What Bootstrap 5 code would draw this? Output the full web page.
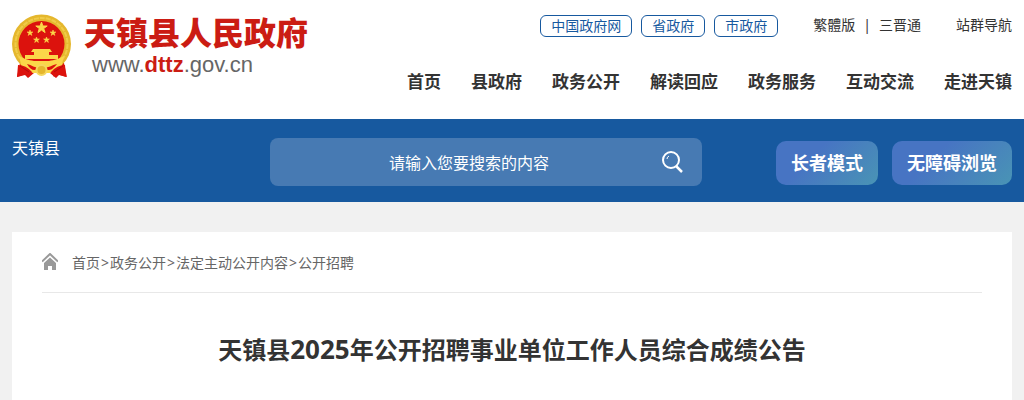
<!DOCTYPE html>
<html lang="zh-CN">
<head>
<meta charset="utf-8">
<meta name="viewport" content="width=device-width, initial-scale=1">
<title>天镇县2025年公开招聘事业单位工作人员综合成绩公告</title>
<link href="https://cdn.jsdelivr.net/npm/bootstrap@5.3.0/dist/css/bootstrap.min.css" rel="stylesheet">
<style>
  body { font-family: "Noto Sans", "Noto Sans CJK SC", sans-serif; font-size: 14px; line-height: 20px; color: #333; background: #f1f1f1; }
  a { color: inherit; text-decoration: none; }
  .emblem { width: 60px; height: 66px; }
  .site-name { font-size: 32px; line-height: 40px; font-weight: 900; color: #cb1c13; }
  .site-url { font-family: "Liberation Sans", sans-serif; font-size: 22px; line-height: 24px; color: #666; }
  .site-url b { color: #cb1c13; }
  .site-header { padding-top: 13px; padding-bottom: 25px; }
  .header-side { gap: 33px; }
  .gov-links { gap: 9px; margin-right: 35px; }
  .gov-link { border: 1px solid #17599f; border-radius: 6px; color: #17599f; padding: 0 10px; }
  .top-links { padding-top: 2px; line-height: 20px; }
  .sites { margin-left: 35px; }
  .main-nav { gap: 30px; font-size: 17px; line-height: 24px; font-weight: 700; }
  .band { background: #17599f; color: #fff; padding-top: 19px; padding-bottom: 16px; }
  .region { font-size: 16px; }
  .search { width: 432px; height: 48px; border-radius: 8px; background: #477ab3; }
  .search input { background: none; border: 0; outline: 0; color: #fff; font-size: 16px; line-height: 24px; text-align: center; min-width: 0; padding: 2px 0 0 10px; }
  .search input::placeholder { color: #fff; opacity: 1; }
  .modes { gap: 14px; margin-left: 74px; padding-top: 3px; }
  .mode-btn { height: 44px; border: 0; border-radius: 10px; padding: 0 15px; color: #fff; font-size: 18px; font-weight: 700; background: linear-gradient(135deg, #4774c3 35%, #4994b5); }
  .article { padding: 20px 30px 32px; margin-top: 30px; }
  .crumbs { gap: 14px; color: #666; border-bottom: 1px solid #e8e8e8; padding-bottom: 19px; padding-top: 1px; }
  .crumbs .sep { padding: 0 1px; }
  h1 { font-size: 24px; line-height: 36px; font-weight: 700; margin-top: 38px; }
  h1 .year { font-size: 26px; }
</style>
</head>
<body>
<header class="bg-white">
  <div class="container-fluid site-header d-flex justify-content-between">
    <a href="#" class="d-flex">
      <svg class="emblem flex-shrink-0" viewBox="0 0 60 66" aria-hidden="true">
        <path d="M8 50 5 64l8-2 3 3 6-5h16l6 5 3-3 8 2-3-14z" fill="#d9120d"/>
        <circle cx="29.500" cy="31" r="29.500" fill="#e5b72d"/>
        <circle cx="29.500" cy="31" r="26" fill="none" stroke="#f0cb48" stroke-width="2" stroke-dasharray="5 1"/>
        <circle cx="29.500" cy="31" r="23" fill="#dc120d"/>
        <g fill="#fbd749">
          <path d="m29.500 9 1.400 4h4.300l-3.500 2.500 1.400 4.100-3.600-2.500-3.500 2.500 1.300-4.100-3.500-2.500h4.300z" stroke="#fbd749"/>
          <path d="m18 17 .7 2h2.200l-1.700 1.300.7 2.100-1.900-1.300-1.800 1.300.7-2.100-1.800-1.300h2.200zM41 17l.7 2h2.200l-1.700 1.300.7 2.100-1.900-1.300-1.800 1.300.7-2.100-1.800-1.300h2.200zM24.500 24l.7 2h2.200l-1.700 1.300.7 2.100-1.900-1.300-1.800 1.300.7-2.100-1.800-1.300h2.200zM34.500 24l.7 2h2.200l-1.700 1.300.7 2.100-1.900-1.300-1.800 1.300.7-2.100-1.800-1.300h2.200z" stroke="#fbd749" stroke-width=".6"/>
          <path d="M21 36h17l2 3H19zM22 39h15v3h9v4H13v-4h9z"/>
          <path d="M7 43c6 3 9 4 15 5h15c6-1 9-2 15-5l-3 12-11 5H21l-11-5z"/>
        </g>
        <path d="M15 51c5 1 7 4 14.500 4S40 52 45 51c-4 5-6 6-9 6l-6.500-2-7 2c-3 0-5-2-7.500-6z" fill="#dc120d"/>
        <circle cx="29.500" cy="57" r="5" fill="#e5b72d" stroke="#f5d75d" stroke-width="2"/>
        <path d="M6 52q8 0 14 7l-3 5-3-3-9 3zm47 0q-8 0-14 7l3 5 3-3 9 3z" fill="#dc120d"/>
        <path d="m8 53 9 6M51 53l-9 6" stroke="#b40b0b" stroke-width="1"/>
      </svg>
      <span class="d-flex flex-column ps-2">
        <span class="site-name ps-1">天镇县人民政府</span>
        <span class="site-url ps-2 ms-1">www.<b>dttz</b>.gov.cn</span>
      </span>
    </a>
    <div class="header-side d-flex flex-column align-items-end">
      <div class="top-links d-flex">
        <div class="gov-links d-flex">
          <a class="gov-link" href="#">中国政府网</a>
          <a class="gov-link" href="#">省政府</a>
          <a class="gov-link" href="#">市政府</a>
        </div>
        <a href="#">繁體版</a><span class="px-2">|</span><a href="#">三晋通</a>
        <a class="sites" href="#">站群导航</a>
      </div>
      <nav class="main-nav d-flex" aria-label="主导航">
        <a href="#">首页</a><a href="#">县政府</a><a href="#">政务公开</a><a href="#">解读回应</a><a href="#">政务服务</a><a href="#">互动交流</a><a href="#">走进天镇</a>
      </nav>
    </div>
  </div>
</header>
<section class="band">
  <div class="container-fluid d-flex">
    <div class="region flex-fill">天镇县</div>
    <form class="search d-flex align-items-center">
      <input class="flex-fill" type="text" placeholder="请输入您要搜索的内容" aria-label="搜索">
      <button class="btn p-0 me-3 border-0" type="button" aria-label="搜索">
        <svg class="d-block" width="28" height="28" viewBox="0 0 28 28" fill="none" stroke="#fff" stroke-width="2"><circle cx="13" cy="12" r="8"/><path d="m18 18 6 6" stroke-width="2.500"/><path d="M9 11q0-2 2-3" stroke-width="1"/></svg>
      </button>
    </form>
    <div class="modes d-flex">
      <button class="mode-btn" type="button">长者模式</button>
      <button class="mode-btn" type="button">无障碍浏览</button>
    </div>
  </div>
</section>
<main class="container-fluid">
  <article class="article bg-white">
    <nav class="crumbs d-flex" aria-label="当前位置">
      <svg width="16" height="18" viewBox="0 0 16 18" aria-hidden="true"><path d="M0 8.500 8 1l8 7.500" fill="none" stroke="#999" stroke-width="2"/><path d="m8 4.500 6 5.500v7h-4v-4H6v4H2v-7z" fill="#999"/></svg>
      <div><a href="#">首页</a><span class="sep">&gt;</span><a href="#">政务公开</a><span class="sep">&gt;</span><a href="#">法定主动公开内容</a><span class="sep">&gt;</span><a href="#">公开招聘</a></div>
    </nav>
    <h1 class="text-center">天镇县<span class="year">2025</span>年公开招聘事业单位工作人员综合成绩公告</h1>
  </article>
</main>
<script src="https://cdn.jsdelivr.net/npm/bootstrap@5.3.0/dist/js/bootstrap.bundle.min.js"></script>
</body>
</html>
